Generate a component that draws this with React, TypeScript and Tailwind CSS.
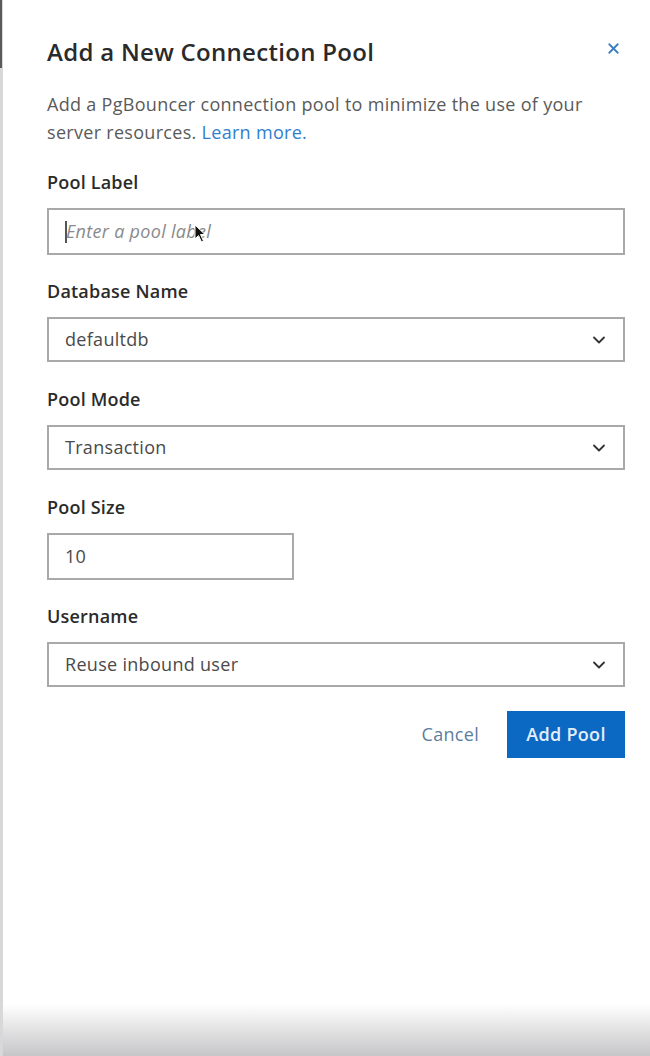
import { X, ChevronDown } from "lucide-react";

const labelCls = "text-[18px] font-semibold text-[#2b2b2b] leading-[17px] tracking-[0.2px]";
const boxCls =
  "flex items-center justify-between border-2 border-[#a9a9ab] bg-white px-[16px] text-[18px] tracking-[0.3px] text-[#4a4a4a]";

function Select({ value }: { value: string }) {
  return (
    <div className={`${boxCls} h-[45px] w-[578px]`}>
      <span>{value}</span>
      <ChevronDown className="w-[20px] h-[20px] text-[#333] mr-[-2px]" strokeWidth={2.2} />
    </div>
  );
}

export default function App() {
  return (
    <div
      className="relative h-screen w-full bg-white flex flex-col overflow-hidden"
      style={{ fontFamily: "'Open Sans', Lato, sans-serif" }}
    >
      <div className="absolute left-0 top-0 bottom-0 w-[3px] bg-[#d8d8da]" />
      <div className="absolute left-0 top-0 h-[68px] w-[2px] bg-[#5a5a5a]" />

      <div className="flex-1 pl-[47px] pr-[26px] pt-[36px]">
        <div className="flex items-start justify-between">
          <h1 className="text-[24px] font-semibold text-[#2a2a2a] leading-[32px] tracking-[0.3px]">
            Add a New Connection Pool
          </h1>
          <X className="w-[17px] h-[17px] text-[#3b7dc1] mt-[4px] mr-[2px]" strokeWidth={2.5} />
        </div>

        <p className="mt-[22px] text-[18px] leading-[28px] tracking-[0.3px] text-[#5a5a5a] w-[550px]">
          Add a PgBouncer connection pool to minimize the use of your server resources.{" "}
          <a className="text-[#2f80cf]">Learn more.</a>
        </p>

        <div className="mt-[28px] flex flex-col">
          <span className={labelCls}>Pool Label</span>
          <div className={`${boxCls} relative mt-[17px] h-[47px] w-[578px] justify-start px-[10px]`}>
            <span className="w-[2px] h-[22px] bg-[#555] mr-[-1px]" />
            <span className="italic text-[#8a8a8a]">Enter a pool label</span>
            <svg
              className="absolute left-[145px] top-[14px]"
              width="14"
              height="20"
              viewBox="0 0 14 20"
            >
              <path d="M1 1 L1 15 L4.5 11.5 L7.5 18 L9.5 17 L6.5 10.5 L11 10.5 Z" fill="#111" stroke="#fff" strokeWidth="1" />
            </svg>
          </div>

          <span className={`${labelCls} mt-[28px]`}>Database Name</span>
          <div className="mt-[17px]">
            <Select value="defaultdb" />
          </div>

          <span className={`${labelCls} mt-[29px]`}>Pool Mode</span>
          <div className="mt-[17px]">
            <Select value="Transaction" />
          </div>

          <span className={`${labelCls} mt-[29px]`}>Pool Size</span>
          <div className={`${boxCls} mt-[17px] h-[47px] w-[247px] justify-start px-[12px]`}>
            10
          </div>

          <span className={`${labelCls} mt-[28px]`}>Username</span>
          <div className="mt-[17px]">
            <Select value="Reuse inbound user" />
          </div>

          <div className="mt-[24px] w-[578px] flex items-center justify-end gap-[28px]">
            <button className="text-[18px] tracking-[0.3px] text-[#5e7d9c]">Cancel</button>
            <button className="h-[47px] w-[118px] bg-[#0b69c4] text-[18px] tracking-[0.3px] font-semibold text-[#e4eefb]">
              Add Pool
            </button>
          </div>
        </div>
      </div>

      <div className="h-[52px] bg-gradient-to-b from-white to-[#c6c6c8]" />
    </div>
  );
}
